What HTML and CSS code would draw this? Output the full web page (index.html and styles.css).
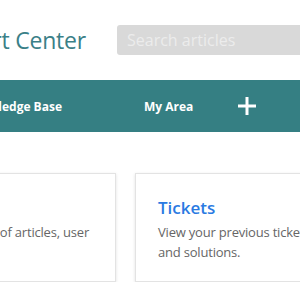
FILE: index.html
```html
<!DOCTYPE html>
<html lang="en">
<head>
<meta charset="utf-8">
<title>Support Center</title>
<link rel="stylesheet" href="styles.css">
</head>
<body>
<header class="header">
  <div class="brand"><h1 class="brand-title">Support Center</h1></div>
  <div class="search">Search articles</div>
</header>
<nav class="nav">
  <div class="nav-first"><a class="nav-link">Knowledge Base</a></div>
  <a class="nav-link nav-my">My Area</a>
  <span class="nav-plus" aria-label="New">
    <svg width="20" height="20" viewBox="0 0 20 20"><path d="M10 1v18M1 10h18" stroke="#fff" stroke-width="3" fill="none"/></svg>
  </span>
</nav>
<main class="content">
  <div class="cards">
    <section class="card card-left">
      <h2 class="card-title">Knowledge</h2>
      <div class="line-end"><p class="card-text">Browse our <span class="blue">wikipedia</span> of articles, user</p></div>
      <p class="card-text">guides and FAQs.</p>
    </section>
    <section class="card">
      <h2 class="card-title">Tickets</h2>
      <p class="card-text">View your previous tickets, replies<br>and solutions.</p>
    </section>
  </div>
</main>
</body>
</html>
```
FILE: styles.css
```css
html, body {
  margin: 0;
  padding: 0;
  overflow: hidden;
  background: #fff;
  font-family: "Open Sans", "Noto Sans", sans-serif;
}
.header {
  height: 80px;
  display: flex;
  align-items: center;
}
.brand {
  width: 86px;
  min-width: 0;
  flex: 0 0 86px;
  display: flex;
  justify-content: flex-end;
}
.brand-title {
  margin: 0;
  flex: 0 0 auto;
  white-space: nowrap;
  font-size: 23px;
  font-weight: 400;
  color: #3a8087;
  line-height: 30px;
  letter-spacing: -0.2px;
}
.search {
  margin-left: 31px;
  flex: 0 0 260px;
  height: 30px;
  background: #d9d9d9;
  border-radius: 3px;
  color: #ececec;
  font-size: 16px;
  line-height: 30px;
  padding-left: 10px;
  white-space: nowrap;
}
.nav {
  height: 52px;
  background: #357f83;
  display: flex;
  align-items: center;
}
.nav-first {
  width: 62px;
  min-width: 0;
  flex: 0 0 62px;
  display: flex;
  justify-content: flex-end;
}
.nav-first .nav-link {
  flex: 0 0 auto;
}
.nav-link {
  color: #fff;
  font-weight: 700;
  font-size: 12px;
  white-space: nowrap;
}
.nav-my {
  margin-left: 82px;
}
.nav-plus {
  margin-left: 44px;
  display: flex;
}
.content {
  padding-top: 41px;
}
.cards {
  display: flex;
  gap: 19px;
  margin-left: -134px;
}
.card {
  flex: 0 0 auto;
  width: 250px;
  height: 109px;
  box-sizing: border-box;
  border: 1px solid #e3e3e3;
  box-shadow: 0 1px 3px rgba(0, 0, 0, 0.12);
  padding: 22px 22px 0;
}
.card-title {
  margin: 0 0 2px;
  font-size: 17px;
  font-weight: 600;
  color: #2a7ae2;
  line-height: 24px;
}
.card-text {
  margin: 0;
  font-size: 13px;
  line-height: 20px;
  color: #666;
  white-space: nowrap;
  letter-spacing: -0.2px;
}
.line-end {
  display: flex;
  justify-content: flex-end;
  width: 200px;
}
.line-end .card-text {
  flex: 0 0 auto;
}
.blue {
  color: #2a7ae2;
}
```
